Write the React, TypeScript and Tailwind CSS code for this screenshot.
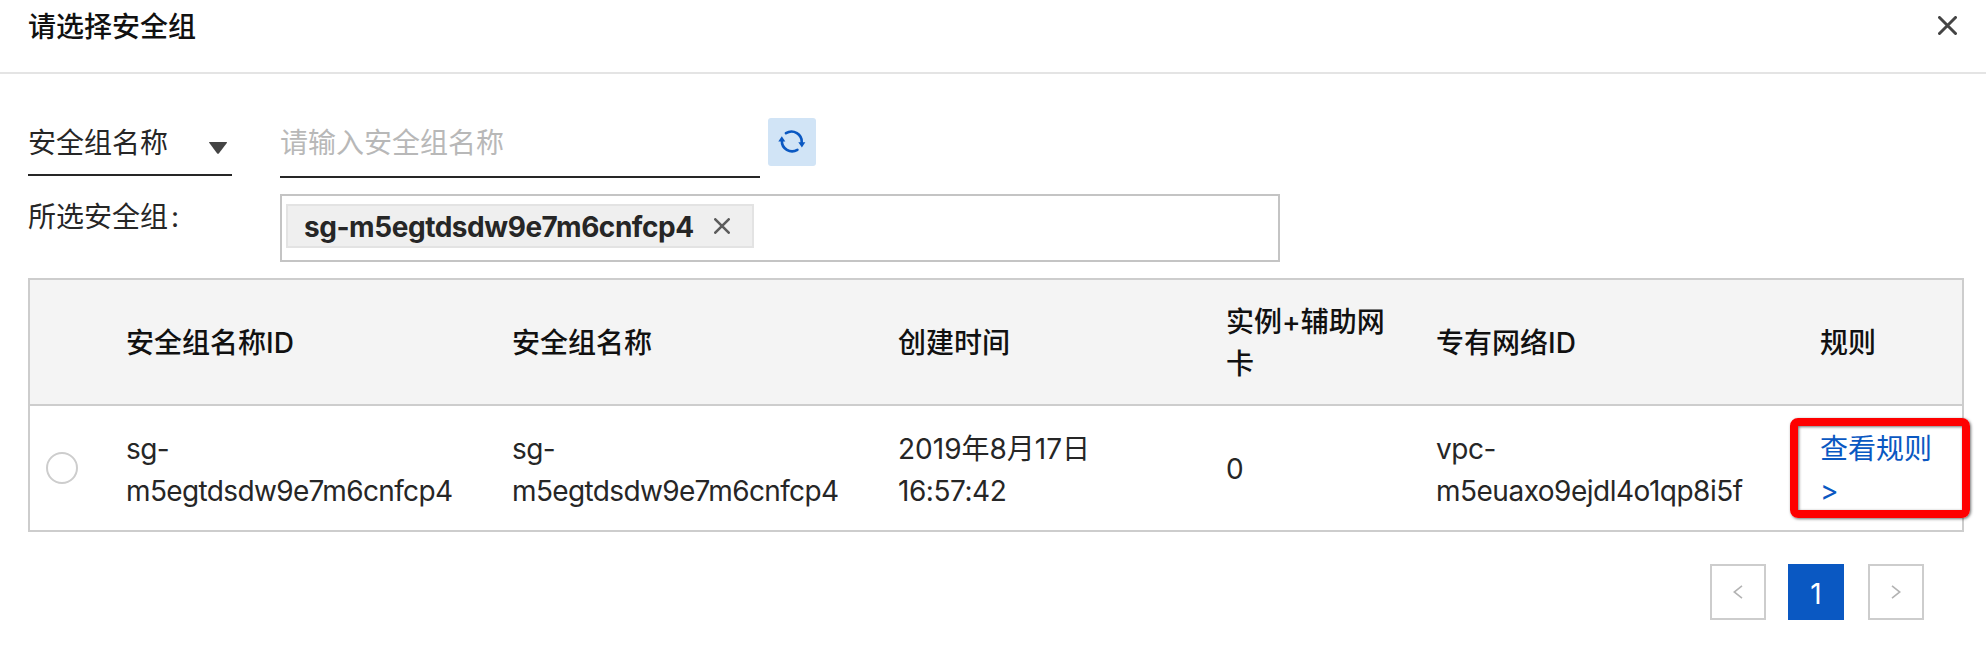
import type { ReactNode } from "react";

const headers: ReactNode[] = [
  "",
  <>安全组名称ID</>,
  <>安全组名称</>,
  <>创建时间</>,
  <>实例+辅助网<br />卡</>,
  <>专有网络ID</>,
  <>规则</>,
];

function CloseIcon({ size, color, width }: { size: number; color: string; width: number }) {
  const a = width / 2;
  const b = size - width / 2;
  return (
    <svg width={size} height={size} viewBox={`0 0 ${size} ${size}`} fill="none" stroke={color} strokeWidth={width} strokeLinecap="round">
      <path d={`M${a} ${a}L${b} ${b}M${b} ${a}L${a} ${b}`} />
    </svg>
  );
}

function RefreshIcon() {
  return (
    <svg width="28" height="26" viewBox="0 0 28 26" fill="none" stroke="#0a58c2" strokeWidth="2.6" strokeLinecap="round">
      <path d="M8 4.2A10.2 10.2 0 0 1 23.6 14" />
      <path d="M19.4 20.8A10.2 10.2 0 0 1 3.9 11.5" />
      <path d="M20.3 13.2h7l-3.4 5.2z" fill="#0a58c2" stroke="none" />
      <path d="M0.3 12.6h7L3.8 7.2z" fill="#0a58c2" stroke="none" />
    </svg>
  );
}

export default function App() {
  return (
    <div className="flex h-[660px] w-[1986px] flex-col overflow-hidden bg-white font-['Inter','Noto_Sans_CJK_SC',sans-serif] text-[28px] leading-[42px] text-[#262626]">
      <header className="flex h-[74px] items-start justify-between border-b-2 border-[#e4e4e4] pr-[29px] pl-7">
        <h1 className="mt-[6px] font-medium text-[#111]">请选择安全组</h1>
        <button className="mt-4">
          <CloseIcon size={19} color="#444" width={3} />
        </button>
      </header>

      <div className="flex pt-[44px] pl-7">
        <div className="flex h-[58px] w-[204px] items-start justify-between border-b-2 border-[#262626] pr-[5px]">
          <span className="mt-1">安全组名称</span>
          <svg className="mt-6" width="18" height="12" viewBox="0 0 18 12" fill="#444">
            <path d="M0 .5Q0 0 .5 0H17.5Q18 0 18 .8L10 11.2Q9 12.2 8 11.2Z" />
          </svg>
        </div>
        <div className="ml-12 h-[60px] w-[480px] border-b-2 border-[#262626] pt-1 text-[#b8b8b8]">请输入安全组名称</div>
        <button className="ml-2 flex size-12 items-center justify-center rounded-[3px] bg-[#d1e4f6] pr-px">
          <RefreshIcon />
        </button>
      </div>

      <div className="mt-4 flex pl-7">
        <div className="w-[252px] pt-0.5">所选安全组<span className="ml-[3px]">:</span></div>
        <div className="h-[68px] w-[1000px] border-2 border-[#c4c4c4] pt-2 pl-1">
          <div className="flex h-11 w-[468px] items-center justify-between border-2 border-[#e3e3e3] bg-[#efefef] pr-[22px] pl-4">
            <span className="pt-0.5 font-bold tracking-[-0.45px] whitespace-nowrap">sg-m5egtdsdw9e7m6cnfcp4</span>
            <CloseIcon size={16} color="#5c5c5c" width={2.6} />
          </div>
        </div>
      </div>

      <div className="mt-4 ml-7 flex w-[1936px] flex-col border-2 border-[#cdcdcd]">
        <div className="grid h-[126px] grid-cols-[96px_386px_386px_328px_210px_384px_1fr] items-center border-b-2 border-[#cdcdcd] bg-[#f4f4f4] pt-0.5 font-medium text-[#111]">
          {headers.map((label, i) => (
            <div key={i} className="whitespace-nowrap">{label}</div>
          ))}
        </div>
        <div className="grid h-[124px] grid-cols-[96px_386px_386px_328px_210px_384px_1fr] items-center whitespace-nowrap">
          <div className="pl-4">
            <div className="size-8 rounded-full border-2 border-[#cdcdcd]" />
          </div>
          <div className="pt-[3px] tracking-[-0.64px]">sg-<br />m5egtdsdw9e7m6cnfcp4</div>
          <div className="pt-[3px] tracking-[-0.64px]">sg-<br />m5egtdsdw9e7m6cnfcp4</div>
          <div className="pt-[3px]">2019年8月17日<br /><span className="tracking-[-0.45px]">16:57:42</span></div>
          <div className="pt-0.5 tracking-[-0.5px]">0</div>
          <div className="pt-[3px] tracking-[-0.5px]">vpc-<br />m5euaxo9ejdl4o1qp8i5f</div>
          <div className="relative pt-[3px] text-[#0a58c2]">
            查看规则<br />&gt;
            <div className="absolute -top-[7px] -left-[30px] h-[100px] w-[180px] rounded-[8px] border-8 border-[#fe0000] shadow-[1px_1px_3px_rgba(0,0,0,0.55),inset_1px_1px_3px_rgba(0,0,0,0.55)]" />
          </div>
        </div>
      </div>

      <nav className="mt-8 flex pl-[1710px]">
        <button className="flex size-14 items-center justify-center border-2 border-[#cdcdcd]">
          <svg width="10" height="14" viewBox="0 0 10 14" fill="none" stroke="#b3b3b3" strokeWidth="1.6"><path d="M9 .8 1.2 7 9 13.2" /></svg>
        </button>
        <button className="ml-[22px] flex size-14 items-center justify-center bg-[#0a58c2] pt-[3px] text-white">1</button>
        <button className="ml-6 flex size-14 items-center justify-center border-2 border-[#cdcdcd]">
          <svg width="10" height="14" viewBox="0 0 10 14" fill="none" stroke="#b3b3b3" strokeWidth="1.6"><path d="M1 .8 8.8 7 1 13.2" /></svg>
        </button>
      </nav>
    </div>
  );
}
